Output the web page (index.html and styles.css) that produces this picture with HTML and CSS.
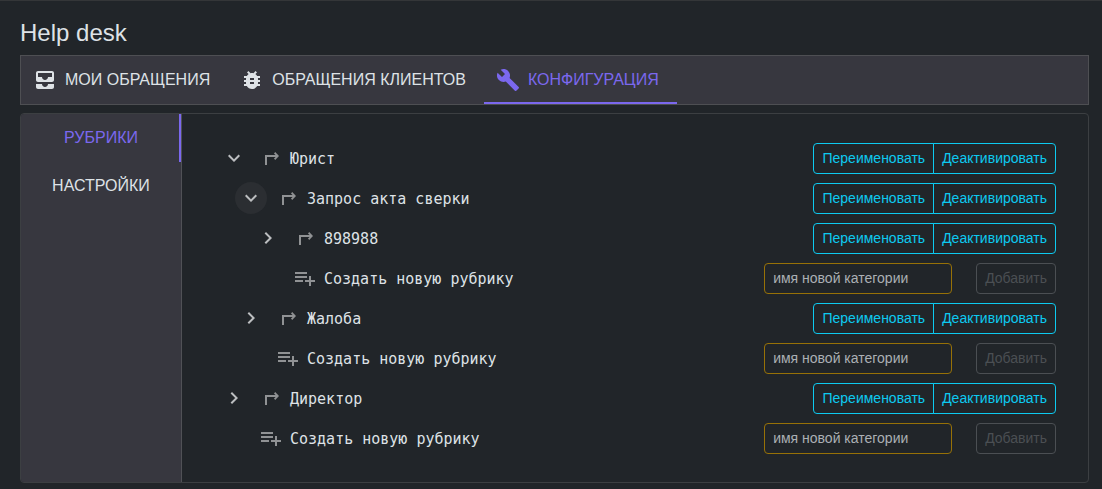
FILE: index.html
```
<!DOCTYPE html>
<html lang="ru">
<head>
<meta charset="utf-8">
<title>Help desk</title>
<link rel="stylesheet" href="styles.css">
</head>
<body>
<svg class="sprite" aria-hidden="true">
  <symbol id="down" viewBox="0 0 24 24"><path d="M16.59 8.59 12 13.17 7.41 8.59 6 10l6 6 6-6z"/></symbol>
  <symbol id="right" viewBox="0 0 24 24"><path d="M10 6 8.59 7.41 13.17 12l-4.58 4.59L10 18l6-6z"/></symbol>
  <symbol id="turn" viewBox="0 0 24 24"><path d="M5 19V9h10.600l-1.600-1.600L15.200 6 19 10l-3.800 4-1.200-1.400L15.600 11H7v8z"/></symbol>
  <symbol id="add" viewBox="0 0 24 24"><path d="M14 10H2v2h12zm0-4H2v2h12zm4 8v-4h-2v4h-4v2h4v4h2v-4h4v-2zM2 16h8v-2H2z"/></symbol>
</svg>
<main class="page">
  <h1 class="title">Help desk</h1>
  <div class="tabs" role="tablist">
    <button class="tab" role="tab" aria-selected="false"><svg class="icon" viewBox="0 0 24 24"><path d="M19 3H5c-1.1 0-2 .9-2 2v7c0 1.1.9 2 2 2h14c1.1 0 2-.9 2-2V5c0-1.1-.9-2-2-2zm0 6h-4c0 1.62-1.38 3-3 3s-3-1.38-3-3H5V5h14v4zm-4 7h6v3c0 1.1-.9 2-2 2H5c-1.1 0-2-.9-2-2v-3h6c0 1.66 1.34 3 3 3s3-1.34 3-3z"/></svg>МОИ ОБРАЩЕНИЯ</button>
    <button class="tab" role="tab" aria-selected="false"><svg class="icon" viewBox="0 0 24 24"><path d="M20 8h-2.81c-.45-.78-1.07-1.45-1.82-1.96L17 4.41 15.59 3l-2.17 2.17C12.96 5.06 12.49 5 12 5c-.49 0-.96.06-1.41.17L8.41 3 7 4.41l1.62 1.63C7.88 6.55 7.26 7.22 6.81 8H4v2h2.09c-.05.33-.09.66-.09 1v1H4v2h2v1c0 .34.04.67.09 1H4v2h2.81c1.04 1.79 2.97 3 5.19 3s4.15-1.21 5.19-3H20v-2h-2.09c.05-.33.09-.66.09-1v-1h2v-2h-2v-1c0-.34-.04-.67-.09-1H20V8zm-6 8h-4v-2h4v2zm0-4h-4v-2h4v2z"/></svg>ОБРАЩЕНИЯ КЛИЕНТОВ</button>
    <button class="tab selected" role="tab" aria-selected="true"><svg class="icon" viewBox="0 0 24 24"><path d="m22.7 19-9.1-9.1c.9-2.3.4-5-1.5-6.9-2-2-5-2.4-7.4-1.3L9 6 6 9 1.6 4.7C.4 7.1.9 10.1 2.9 12.1c1.9 1.9 4.6 2.4 6.9 1.5l9.1 9.1c.4.4 1 .4 1.4 0l2.3-2.3c.5-.4.5-1.1.1-1.4z"/></svg>КОНФИГУРАЦИЯ</button>
  </div>
  <section class="card">
    <div class="side" role="tablist" aria-orientation="vertical">
      <button class="side-tab selected" role="tab" aria-selected="true">РУБРИКИ</button>
      <button class="side-tab" role="tab" aria-selected="false">НАСТРОЙКИ</button>
    </div>
    <ul class="tree">
      <li>
        <div class="row"><button class="toggle" aria-label="Свернуть"><svg class="icon"><use href="#down"/></svg></button><svg class="icon muted"><use href="#turn"/></svg><span class="name">Юрист</span><span class="group"><button class="btn">Переименовать</button><button class="btn">Деактивировать</button></span></div>
        <ul class="branch">
          <li>
            <div class="row"><button class="toggle active" aria-label="Свернуть"><svg class="icon"><use href="#down"/></svg></button><svg class="icon muted"><use href="#turn"/></svg><span class="name">Запрос акта сверки</span><span class="group"><button class="btn">Переименовать</button><button class="btn">Деактивировать</button></span></div>
            <ul class="branch">
              <li class="row"><button class="toggle" aria-label="Развернуть"><svg class="icon"><use href="#right"/></svg></button><svg class="icon muted"><use href="#turn"/></svg><span class="name">898988</span><span class="group"><button class="btn">Переименовать</button><button class="btn">Деактивировать</button></span></li>
              <li class="row create"><svg class="icon muted"><use href="#add"/></svg><label class="name" for="new-1">Создать новую рубрику</label><input class="field" id="new-1" placeholder="имя новой категории"><button class="btn add" disabled>Добавить</button></li>
            </ul>
          </li>
          <li class="row"><button class="toggle" aria-label="Развернуть"><svg class="icon"><use href="#right"/></svg></button><svg class="icon muted"><use href="#turn"/></svg><span class="name">Жалоба</span><span class="group"><button class="btn">Переименовать</button><button class="btn">Деактивировать</button></span></li>
          <li class="row create"><svg class="icon muted"><use href="#add"/></svg><label class="name" for="new-2">Создать новую рубрику</label><input class="field" id="new-2" placeholder="имя новой категории"><button class="btn add" disabled>Добавить</button></li>
        </ul>
      </li>
      <li class="row"><button class="toggle" aria-label="Развернуть"><svg class="icon"><use href="#right"/></svg></button><svg class="icon muted"><use href="#turn"/></svg><span class="name">Директор</span><span class="group"><button class="btn">Переименовать</button><button class="btn">Деактивировать</button></span></li>
      <li class="row create"><svg class="icon muted"><use href="#add"/></svg><label class="name" for="new-3">Создать новую рубрику</label><input class="field" id="new-3" placeholder="имя новой категории"><button class="btn add" disabled>Добавить</button></li>
    </ul>
  </section>
</main>
</body>
</html>
```
FILE: styles.css
```
* {
  box-sizing: border-box;
}

body {
  margin: 0;
  background: #212529;
  color: #dee2e6;
  font-family: "Liberation Sans", Arial, sans-serif;
  font-size: 16px;
  line-height: 24px;
}

button,
input {
  margin: 0;
  background: none;
  color: inherit;
  font: inherit;
}

ul {
  margin: 0;
  padding: 0;
  list-style: none;
}

.sprite {
  display: none;
}

.page {
  border-top: 1px solid #343638;
  padding: 16px 13px 6px 20px;
}

.title {
  margin: 0 0 6px;
  font-size: 24px;
  font-weight: 400;
  line-height: 32px;
}

.tabs {
  display: flex;
  margin-bottom: 8px;
  border: 1px solid #4e4f53;
  background: #37373f;
}

.tab {
  display: flex;
  align-items: center;
  gap: 8px;
  height: 48px;
  padding: 0 18px 0 12px;
  border: 0;
  white-space: nowrap;
}

.selected {
  color: #7b68ee;
}

.tab.selected {
  box-shadow: inset 0 -2px #7b68ee;
}

.icon {
  flex: none;
  width: 24px;
  height: 24px;
  fill: currentColor;
}

.muted {
  color: #909294;
}

.card {
  display: flex;
  border: 1px solid #3c3f42;
  border-radius: 4px;
}

.side {
  flex: none;
  width: 161px;
  border-right: 1px solid #505156;
  border-radius: 3px 0 0 3px;
  background: #37373f;
}

.side-tab {
  display: block;
  width: 100%;
  height: 48px;
  padding: 0;
  border: 0;
}

.side-tab.selected {
  box-shadow: inset -2px 0 #7b68ee;
}

.tree {
  flex: 1;
  padding: 24px 32px 24px 36px;
}

.branch {
  padding-left: 17px;
}

.row {
  display: flex;
  align-items: center;
  height: 40px;
}

.toggle {
  display: flex;
  align-items: center;
  justify-content: center;
  width: 32px;
  height: 32px;
  margin-right: 10px;
  padding: 0;
  border: 0;
  border-radius: 50%;
  color: #bcbec0;
}

.toggle.active {
  background: #2b2e32;
}

.create {
  padding-left: 41px;
}

.name {
  flex: 1;
  padding: 2px 0 0 6px;
  font-family: "DejaVu Sans Mono", monospace;
  font-size: 15px;
}

.create .name {
  padding-left: 7px;
}

.group {
  display: flex;
}

.btn {
  padding: 4px 8px;
  border: 1px solid #0dcaf0;
  border-radius: 4px;
  color: #0dcaf0;
  font-size: 14px;
  line-height: 21px;
}

.group .btn:first-child {
  border-radius: 4px 0 0 4px;
}

.group .btn:last-child {
  margin-left: -1px;
  border-radius: 0 4px 4px 0;
}

.add {
  border-color: #4b4f53;
  color: #4b4f53;
}

.field {
  width: 188px;
  height: 31px;
  margin-right: 24px;
  padding: 4px 8px;
  border: 1px solid #977107;
  border-radius: 4px;
  font-size: 14px;
  line-height: 21px;
}

.field::placeholder {
  color: #abb0b4;
  opacity: 1;
}
```
